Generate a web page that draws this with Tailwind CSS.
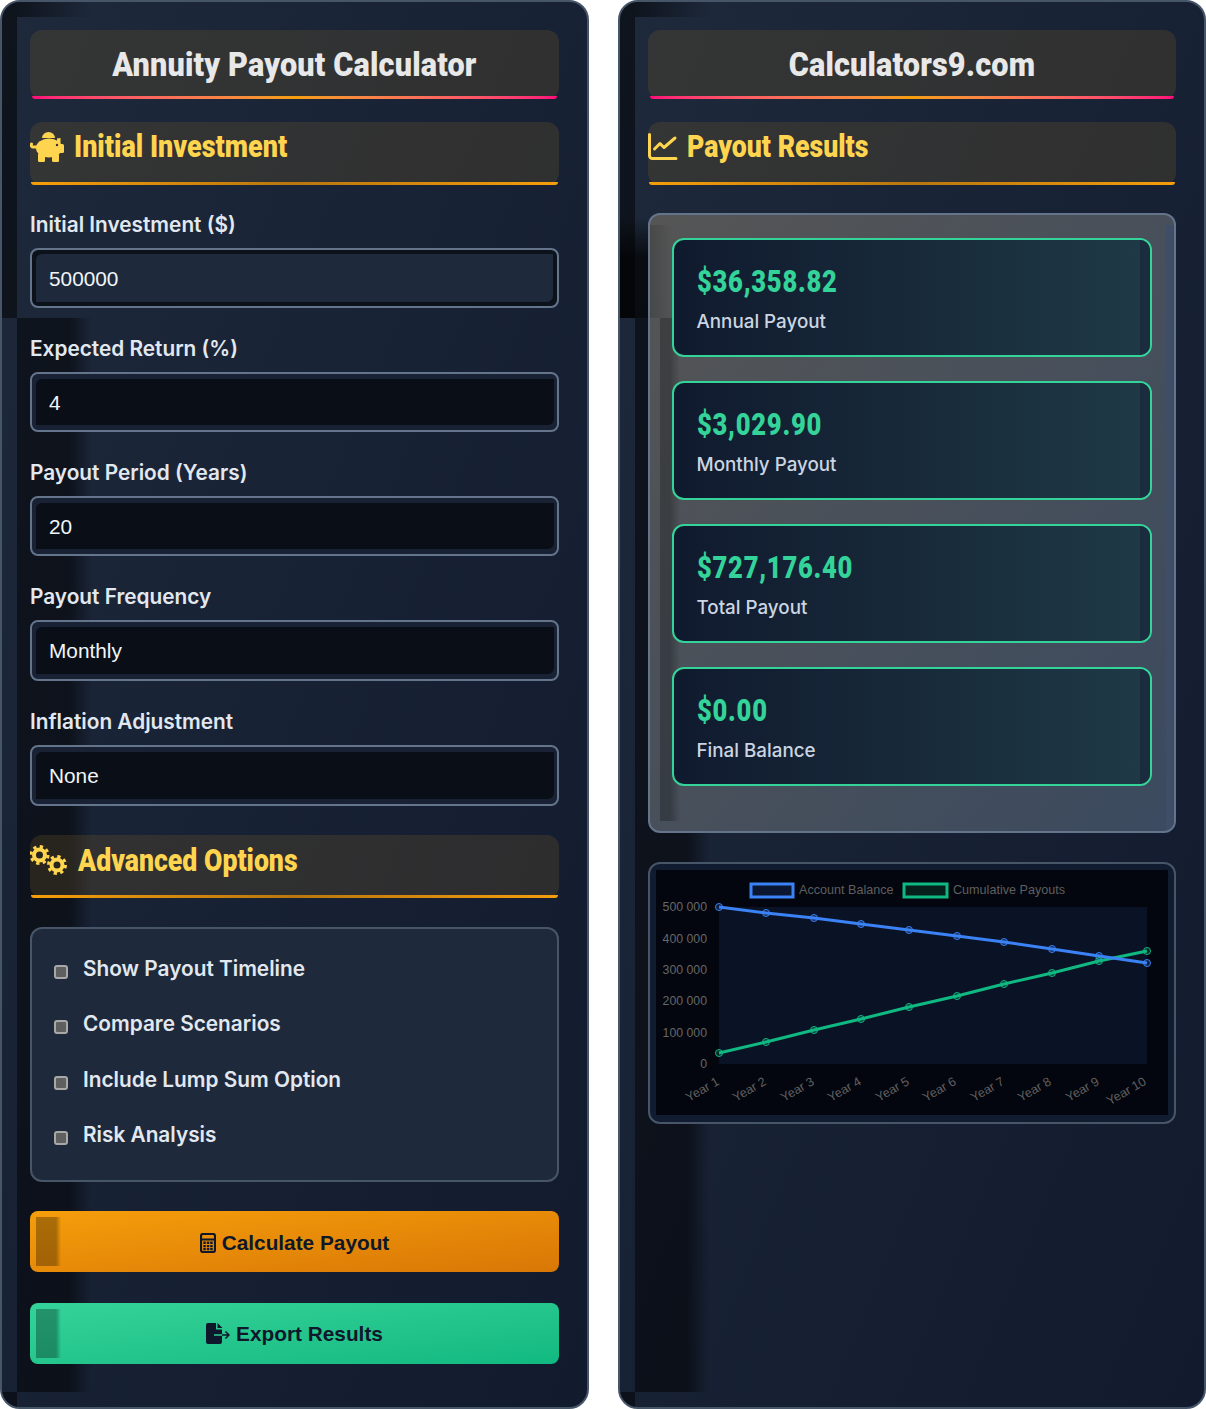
<!DOCTYPE html>
<html>
<head>
<meta charset="utf-8">
<title>Annuity Payout Calculator</title>
<script src="https://cdn.jsdelivr.net/npm/@tailwindcss/browser@4"></script>
</head>
<body class="bg-white font-['Inter',sans-serif]">
<div class="grid grid-cols-[589px_588px] gap-[29px] w-[1206px] h-[1409px]">

  <!-- left panel -->
  <div class="relative isolate overflow-hidden h-[1409px] rounded-[20px] border-2 border-[#475569] bg-gradient-to-br from-[#1e293b] to-[#121a2e] p-[28px]">
    <div class="absolute -z-10 left-0 top-0 w-[15px] h-[316px] bg-black/50"></div>
    <div class="absolute -z-10 left-[15px] top-0 w-[75px] h-[15px] bg-gradient-to-r from-black/50 to-transparent"></div>
    <div class="absolute -z-10 left-[15px] top-[316px] w-[75px] h-[1074px] bg-gradient-to-r from-black/50 via-black/50 via-70% to-transparent"></div>
    <div class="absolute -z-10 left-0 bottom-0 w-[15px] h-[15px] bg-black/50"></div>

    <div class="relative h-[69px] rounded-xl bg-[#745929]/[0.27] flex items-center justify-center">
      <h1 class="font-['Roboto',sans-serif] font-black text-[34px] tracking-[0.200px] text-[#e8e8e8] scale-x-[0.9] whitespace-nowrap">Annuity Payout Calculator</h1>
      <div class="absolute left-[2px] right-[2px] bottom-0 h-[3px] rounded-b-[6px] bg-gradient-to-r from-[#ff0a78] via-[#f59e0b] to-[#ff0a78]"></div>
    </div>

    <div class="relative mt-[23px] h-[63px] rounded-xl bg-[#745929]/[0.27] flex items-start pt-[10px] gap-[10px]">
      <svg class="w-[34px] h-[30px] fill-[#ffd54f]" viewBox="0 0 34 30">
        <path d="M12 6a6.500 6 0 0 1 13 0z"/>
        <ellipse cx="19" cy="16" rx="13" ry="9.500"/>
        <path d="M27 6.500l3.500-.5v6h-3.500z"/>
        <rect x="28" y="12" width="6" height="9" rx="1.500"/>
        <rect x="8" y="21" width="7" height="9" rx="1.500"/>
        <rect x="22" y="21" width="7" height="9" rx="1.500"/>
        <path d="M7 15H3.500A2 2 0 0 1 1.500 12" fill="none" stroke="#ffd54f" stroke-width="3" stroke-linecap="round"/>
        <circle cx="27" cy="13" r="1.200" fill="#333333"/>
      </svg>
      <h2 class="-mt-[3px] font-['Roboto',sans-serif] font-black text-[31px] leading-[36px] text-[#ffd54f] origin-left scale-x-[0.87] whitespace-nowrap">Initial Investment</h2>
      <div class="absolute left-[1px] right-[1px] bottom-0 h-[3px] rounded-b-[6px] bg-gradient-to-r from-[#f59e0b] via-[#b9770e] to-[#f59e0b]"></div>
    </div>

    <label class="block mt-[26px] text-[20.800px] leading-[28px] font-semibold text-[#e2e8f0]">Initial Investment ($)</label>
    <div class="mt-[9px] h-[60px] rounded-lg border-2 border-[#64748b] bg-[#1e293b] shadow-[inset_4px_4px_0_#0c121a,inset_-4px_-4px_0_#0c121a] flex items-center px-[17px] pt-px font-['Liberation_Sans',sans-serif] text-[20.800px] text-[#f1f5f9]">500000</div>

    <label class="block mt-[27px] text-[20.800px] leading-[28px] font-semibold text-[#e2e8f0]">Expected Return (%)</label>
    <div class="mt-[9px] h-[60px] rounded-lg border-2 border-[#64748b] bg-[#0a0f17] shadow-[inset_4px_5px_0_#182234,inset_-3px_-5px_0_#182234] flex items-center px-[17px] pt-px font-['Liberation_Sans',sans-serif] text-[20.800px] text-[#f1f5f9]">4</div>

    <label class="block mt-[27px] text-[20.800px] leading-[28px] font-semibold text-[#e2e8f0]">Payout Period (Years)</label>
    <div class="mt-[9px] h-[60px] rounded-lg border-2 border-[#64748b] bg-[#0a0f17] shadow-[inset_4px_5px_0_#182234,inset_-3px_-5px_0_#182234] flex items-center px-[17px] pt-px font-['Liberation_Sans',sans-serif] text-[20.800px] text-[#f1f5f9]">20</div>

    <label class="block mt-[27px] text-[20.800px] leading-[28px] font-semibold text-[#e2e8f0]">Payout Frequency</label>
    <div class="mt-[9px] h-[61px] rounded-lg border-2 border-[#64748b] bg-[#0a0f17] shadow-[inset_4px_5px_0_#182234,inset_-3px_-5px_0_#182234] flex items-center px-[17px] font-['Liberation_Sans',sans-serif] text-[20.800px] text-[#f1f5f9]">Monthly</div>

    <label class="block mt-[27px] text-[20.800px] leading-[28px] font-semibold text-[#e2e8f0]">Inflation Adjustment</label>
    <div class="mt-[9px] h-[61px] rounded-lg border-2 border-[#64748b] bg-[#0a0f17] shadow-[inset_4px_5px_0_#182234,inset_-3px_-5px_0_#182234] flex items-center px-[17px] font-['Liberation_Sans',sans-serif] text-[20.800px] text-[#f1f5f9]">None</div>

    <div class="relative mt-[29px] h-[63px] rounded-xl bg-[#745929]/[0.27] flex items-start pt-[8px] gap-[11px]">
      <svg class="w-[37px] h-[31px] mt-[2px] fill-none stroke-[#ffd54f]" viewBox="0 0 37 31">
        <circle cx="9.500" cy="10" r="5.500" stroke-width="4"/>
        <circle cx="9.500" cy="10" r="8.500" stroke-width="3" stroke-dasharray="3.300 3.380"/>
        <circle cx="27" cy="20" r="5.500" stroke-width="4"/>
        <circle cx="27" cy="20" r="8.500" stroke-width="3" stroke-dasharray="3.300 3.380"/>
      </svg>
      <h2 class="font-['Roboto',sans-serif] font-black text-[31px] leading-[36px] text-[#ffd54f] origin-left scale-x-[0.86] whitespace-nowrap">Advanced Options</h2>
      <div class="absolute left-[1px] right-[1px] bottom-0 h-[3px] rounded-b-[6px] bg-gradient-to-r from-[#f59e0b] via-[#b9770e] to-[#f59e0b]"></div>
    </div>

    <div class="mt-[29px] h-[255px] rounded-xl border-2 border-[#475569] bg-[#1e293b] pt-[11.500px] pl-[22px]">
      <div class="h-[55.500px] flex items-center gap-[15px] text-[20.800px] font-semibold text-[#e2e8f0]"><span class="mt-[7px] w-[14px] h-[14px] rounded-[3px] border-2 border-[#a8a8a8] bg-[#5f5f5f]"></span>Show Payout Timeline</div>
      <div class="h-[55.500px] flex items-center gap-[15px] text-[20.800px] font-semibold text-[#e2e8f0]"><span class="mt-[7px] w-[14px] h-[14px] rounded-[3px] border-2 border-[#a8a8a8] bg-[#5f5f5f]"></span>Compare Scenarios</div>
      <div class="h-[55.500px] flex items-center gap-[15px] text-[20.800px] font-semibold text-[#e2e8f0]"><span class="mt-[7px] w-[14px] h-[14px] rounded-[3px] border-2 border-[#a8a8a8] bg-[#5f5f5f]"></span>Include Lump Sum Option</div>
      <div class="h-[55.500px] flex items-center gap-[15px] text-[20.800px] font-semibold text-[#e2e8f0]"><span class="mt-[7px] w-[14px] h-[14px] rounded-[3px] border-2 border-[#a8a8a8] bg-[#5f5f5f]"></span>Risk Analysis</div>
    </div>

    <div class="relative mt-[29px] h-[61px] rounded-lg overflow-hidden bg-gradient-to-br from-[#f59e0b] to-[#d97706] flex items-center justify-center pt-[2px] gap-[6px] font-['Liberation_Sans',sans-serif] text-[20.800px] font-bold text-[#0f172a]">
      <div class="absolute left-[6px] top-[6px] bottom-[6px] w-[25px] bg-gradient-to-r from-black/30 via-black/30 via-80% to-transparent"></div>
      <svg class="w-[16px] h-[20px]" viewBox="0 0 16 20"><rect x="1" y="1" width="14" height="18" rx="2" fill="none" stroke="#0f172a" stroke-width="2.200"/><path d="M2 6.500h12" stroke="#0f172a" stroke-width="1.800"/><path d="M3.300 8.500h2.500v2.400H3.300zM6.800 8.500h2.500v2.400H6.800zM10.200 8.500h2.500v2.400h-2.500zM3.300 12h2.500v2.200H3.300zM6.800 12h2.500v2.200H6.800zM10.200 12h2.500v2.200h-2.500zM3.300 15h2.500v2.200H3.300zM6.800 15h2.500v2.200H6.800zM10.200 15h2.500v2.200h-2.500z" fill="#0f172a"/></svg>
      <span>Calculate Payout</span>
    </div>

    <div class="relative mt-[31px] h-[61px] rounded-lg overflow-hidden bg-gradient-to-br from-[#34d399] to-[#10b981] flex items-center justify-center gap-[6px] font-['Liberation_Sans',sans-serif] text-[20.800px] font-bold text-[#0f172a]">
      <div class="absolute left-[6px] top-[6px] bottom-[6px] w-[25px] bg-gradient-to-r from-black/30 via-black/30 via-80% to-transparent"></div>
      <svg class="w-[24px] h-[21px]" viewBox="0 0 24 21"><path d="M2 0h8v6.500h6V19a2 2 0 0 1-2 2H2a2 2 0 0 1-2-2V2a2 2 0 0 1 2-2z" fill="#0f172a"/><path d="M11.500 0l5 5h-5z" fill="#0f172a"/><path d="M8 12h8" stroke="#2fcf96" stroke-width="1.500"/><path d="M16 12h7M19.500 8.500l3.500 3.500-3.500 3.500" fill="none" stroke="#0f172a" stroke-width="1.500"/></svg>
      <span>Export Results</span>
    </div>
  </div>

  <!-- right panel -->
  <div class="relative isolate overflow-hidden h-[1409px] rounded-[20px] border-2 border-[#475569] bg-gradient-to-br from-[#1e293b] to-[#121a2e] p-[28px]">
    <div class="absolute -z-10 left-0 top-0 w-[15px] h-[316px] bg-black/50"></div>
    <div class="absolute -z-10 left-[15px] top-0 w-[75px] h-[15px] bg-gradient-to-r from-black/50 to-transparent"></div>
    <div class="absolute -z-10 left-[15px] top-[316px] w-[75px] h-[1074px] bg-gradient-to-r from-black/50 via-black/50 via-70% to-transparent"></div>
    <div class="absolute -z-10 left-0 bottom-0 w-[15px] h-[15px] bg-black/50"></div>
    <div class="absolute -z-10 left-0 top-[215px] w-[28px] h-[101px] bg-gradient-to-b from-transparent to-black/70 to-40%"></div>

    <div class="relative h-[69px] rounded-xl bg-[#745929]/[0.27] flex items-center justify-center">
      <h1 class="font-['Roboto',sans-serif] font-black text-[34px] tracking-[0.200px] text-[#e8e8e8] scale-x-[0.9] whitespace-nowrap">Calculators9.com</h1>
      <div class="absolute left-[2px] right-[2px] bottom-0 h-[3px] rounded-b-[6px] bg-gradient-to-r from-[#ff0a78] via-[#f59e0b] to-[#ff0a78]"></div>
    </div>

    <div class="relative mt-[23px] h-[63px] rounded-xl bg-[#745929]/[0.27] flex items-start pt-[7px] gap-[9px]">
      <svg class="w-[30px] h-[27px] mt-[4px] fill-none stroke-[#ffd54f]" viewBox="0 0 30 27" stroke-width="3" stroke-linecap="round" stroke-linejoin="round"><path d="M1.500 1.500v21a3 3 0 0 0 3 3h23.500"/><path d="M6.500 16l5.500-5.500 4 4L27 5"/></svg>
      <h2 class="font-['Roboto',sans-serif] font-black text-[31px] leading-[36px] text-[#ffd54f] origin-left scale-x-[0.86] whitespace-nowrap">Payout Results</h2>
      <div class="absolute left-[1px] right-[1px] bottom-0 h-[3px] rounded-b-[6px] bg-gradient-to-r from-[#f59e0b] via-[#b9770e] to-[#f59e0b]"></div>
    </div>

    <div class="relative mt-[28px] h-[620px] rounded-xl border-2 border-[#64748b] overflow-hidden bg-gradient-to-br from-[#555555] to-[#3b4a5f] pt-[22.500px] px-[22px] flex flex-col gap-[24px]">
      <div class="absolute left-[10px] top-[103px] h-[503px] w-[20px] bg-gradient-to-r from-black/25 via-black/25 to-transparent"></div>
      <div class="absolute left-0 top-[10px] h-[93px] w-[22px] bg-gradient-to-r from-black/15 to-transparent"></div>
      <div class="absolute right-0 top-[10px] bottom-0 w-[8px] bg-[#3f4e66]"></div>
      <div class="relative shrink-0 h-[119px] rounded-xl border-2 border-[#34d399] overflow-hidden bg-gradient-to-r from-[#101a2e] to-[#1f3a46] pl-[22.500px] pt-[21px]">
        <div class="absolute right-0 top-0 bottom-0 w-[10px] bg-[#1a2c3e]"></div>
        <div class="font-['Roboto',sans-serif] font-black text-[32px] tracking-[0.900px] leading-[40px] text-[#34d399] origin-left scale-x-[0.8] whitespace-nowrap">$36,358.82</div>
        <div class="mt-[7px] text-[18.800px] leading-[28px] font-medium text-[#cbd5e1]">Annual Payout</div>
      </div>
      <div class="relative shrink-0 h-[119px] rounded-xl border-2 border-[#34d399] overflow-hidden bg-gradient-to-r from-[#101a2e] to-[#1f3a46] pl-[22.500px] pt-[21px]">
        <div class="absolute right-0 top-0 bottom-0 w-[10px] bg-[#1a2c3e]"></div>
        <div class="font-['Roboto',sans-serif] font-black text-[32px] tracking-[0.900px] leading-[40px] text-[#34d399] origin-left scale-x-[0.8] whitespace-nowrap">$3,029.90</div>
        <div class="mt-[7px] text-[18.800px] leading-[28px] font-medium text-[#cbd5e1]">Monthly Payout</div>
      </div>
      <div class="relative shrink-0 h-[119px] rounded-xl border-2 border-[#34d399] overflow-hidden bg-gradient-to-r from-[#101a2e] to-[#1f3a46] pl-[22.500px] pt-[21px]">
        <div class="absolute right-0 top-0 bottom-0 w-[10px] bg-[#1a2c3e]"></div>
        <div class="font-['Roboto',sans-serif] font-black text-[32px] tracking-[0.900px] leading-[40px] text-[#34d399] origin-left scale-x-[0.8] whitespace-nowrap">$727,176.40</div>
        <div class="mt-[7px] text-[18.800px] leading-[28px] font-medium text-[#cbd5e1]">Total Payout</div>
      </div>
      <div class="relative shrink-0 h-[119px] rounded-xl border-2 border-[#34d399] overflow-hidden bg-gradient-to-r from-[#101a2e] to-[#1f3a46] pl-[22.500px] pt-[21px]">
        <div class="absolute right-0 top-0 bottom-0 w-[10px] bg-[#1a2c3e]"></div>
        <div class="font-['Roboto',sans-serif] font-black text-[32px] tracking-[0.900px] leading-[40px] text-[#34d399] origin-left scale-x-[0.8] whitespace-nowrap">$0.00</div>
        <div class="mt-[7px] text-[18.800px] leading-[28px] font-medium text-[#cbd5e1]">Final Balance</div>
      </div>
    </div>

    <div class="relative mt-[29px] h-[262px] rounded-xl border-2 border-[#475569] bg-[#111c30] overflow-hidden">
      <svg class="absolute left-[4px] top-[6px]" width="514" height="246" viewBox="654 870 514 246" font-family="Liberation Sans, sans-serif" font-size="12.600">
        <rect x="656" y="870" width="512" height="245" fill="#03060e"/>
        <rect x="719" y="907" width="428" height="157" fill="#0a1326"/>
        <rect x="751" y="884" width="42" height="13" fill="#0b1730" stroke="#3b82f6" stroke-width="3"/>
        <text x="799" y="894" fill="#5f5f5f">Account Balance</text>
        <rect x="904" y="884" width="43" height="13" fill="#06201c" stroke="#10b981" stroke-width="3"/>
        <text x="953" y="894" fill="#5f5f5f">Cumulative Payouts</text>
        <g fill="#666666" text-anchor="end" font-size="12.300">
          <text x="707" y="911">500 000</text>
          <text x="707" y="943">400 000</text>
          <text x="707" y="974">300 000</text>
          <text x="707" y="1005">200 000</text>
          <text x="707" y="1037">100 000</text>
          <text x="707" y="1068">0</text>
        </g>
        <g fill="#606060" text-anchor="end">
          <text transform="translate(720 1084) rotate(-30)">Year 1</text>
          <text transform="translate(767 1084) rotate(-30)">Year 2</text>
          <text transform="translate(815 1084) rotate(-30)">Year 3</text>
          <text transform="translate(862 1084) rotate(-30)">Year 4</text>
          <text transform="translate(910 1084) rotate(-30)">Year 5</text>
          <text transform="translate(957 1084) rotate(-30)">Year 6</text>
          <text transform="translate(1005 1084) rotate(-30)">Year 7</text>
          <text transform="translate(1052 1084) rotate(-30)">Year 8</text>
          <text transform="translate(1100 1084) rotate(-30)">Year 9</text>
          <text transform="translate(1147 1084) rotate(-30)">Year 10</text>
        </g>
        <polyline fill="none" stroke="#10b981" stroke-width="3" points="719,1053 766,1042 814,1030 861,1019 909,1007 957,996 1004,984 1052,973 1099,961 1147,951"/>
        <polyline fill="none" stroke="#3b82f6" stroke-width="3" points="719,907 766,913 814,918 861,924 909,930 957,936 1004,942 1052,949 1099,956 1147,963"/>
        <g fill="#3b82f6" fill-opacity="0.2" stroke="#3b82f6" stroke-width="1">
          <circle cx="719" cy="907" r="3.500"/><circle cx="766" cy="913" r="3.500"/><circle cx="814" cy="918" r="3.500"/><circle cx="861" cy="924" r="3.500"/><circle cx="909" cy="930" r="3.500"/><circle cx="957" cy="936" r="3.500"/><circle cx="1004" cy="942" r="3.500"/><circle cx="1052" cy="949" r="3.500"/><circle cx="1099" cy="956" r="3.500"/><circle cx="1147" cy="963" r="3.500"/>
        </g>
        <g fill="#10b981" fill-opacity="0.2" stroke="#10b981" stroke-width="1">
          <circle cx="719" cy="1053" r="3.500"/><circle cx="766" cy="1042" r="3.500"/><circle cx="814" cy="1030" r="3.500"/><circle cx="861" cy="1019" r="3.500"/><circle cx="909" cy="1007" r="3.500"/><circle cx="957" cy="996" r="3.500"/><circle cx="1004" cy="984" r="3.500"/><circle cx="1052" cy="973" r="3.500"/><circle cx="1099" cy="961" r="3.500"/><circle cx="1147" cy="951" r="3.500"/>
        </g>
      </svg>
    </div>
  </div>
</div>
</body>
</html>
